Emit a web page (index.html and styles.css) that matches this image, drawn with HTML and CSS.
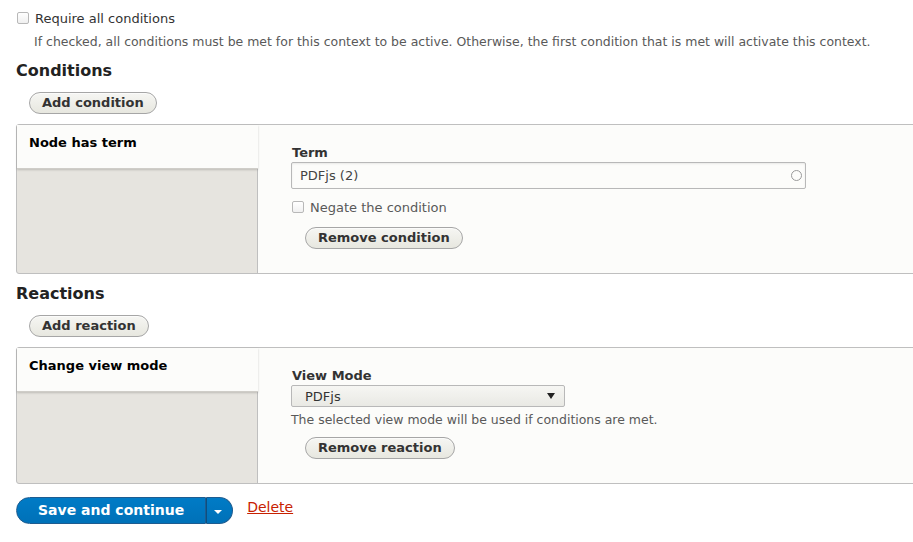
FILE: index.html
```html
<!DOCTYPE html>
<html>
<head>
<meta charset="utf-8">
<link rel="stylesheet" href="styles.css">
</head>
<body>
<div class="page">
  <div class="form-item top-check">
    <label class="check"><span class="cb"></span>Require all conditions</label>
    <div class="desc indent">If checked, all conditions must be met for this context to be active. Otherwise, the first condition that is met will activate this context.</div>
  </div>

  <h2 class="section first">Conditions</h2>
  <div class="btn-row"><button class="btn">Add condition</button></div>

  <div class="vtabs">
    <div class="menu">
      <div class="tab">Node has term</div>
    </div>
    <div class="pane pane-cond">
      <label class="field-label">Term</label>
      <div class="text-input"><span class="value">PDFjs (2)</span><span class="throbber"></span></div>
      <label class="check sub-check"><span class="cb"></span>Negate the condition</label>
      <div class="pane-btn"><button class="btn">Remove condition</button></div>
    </div>
  </div>

  <h2 class="section">Reactions</h2>
  <div class="btn-row"><button class="btn">Add reaction</button></div>

  <div class="vtabs">
    <div class="menu">
      <div class="tab">Change view mode</div>
    </div>
    <div class="pane pane-react">
      <label class="field-label">View Mode</label>
      <div class="select"><span class="value">PDFjs</span><span class="arrow"></span></div>
      <div class="desc">The selected view mode will be used if conditions are met.</div>
      <div class="pane-btn"><button class="btn">Remove reaction</button></div>
    </div>
  </div>

  <div class="actions">
    <div class="split">
      <button class="primary">Save and continue</button>
      <button class="primary toggle"><span class="caret"></span></button>
    </div>
    <a class="danger" href="#">Delete</a>
  </div>
</div>
</body>
</html>
```

FILE: styles.css
```css
html, body {
  margin: 0;
  padding: 0;
  background: #ffffff;
  overflow-x: hidden;
}
body {
  font-family: "DejaVu Sans", Verdana, sans-serif;
  font-size: 13px;
  color: #333333;
}
.page {
  padding: 10px 0 0 16px;
}
.check {
  display: flex;
  align-items: center;
  gap: 6px;
  font-size: 13px;
  line-height: 18px;
  color: #333;
}
.cb {
  display: inline-block;
  width: 10px;
  height: 10px;
  border: 1px solid #b8b8b8;
  border-radius: 2px;
  background: linear-gradient(#ffffff, #f0f0f0);
  margin-top: -3px;
}
.top-check .check {
  margin-left: 1px;
}
.desc {
  font-size: 12.48px;
  line-height: 17px;
  color: #595959;
}
.desc.indent {
  margin: 5px 0 0 18px;
}
.section {
  margin: 10px 0 0 0;
  font-size: 16px;
  line-height: 20px;
  font-weight: bold;
  color: #222;
}
.section.first {
  margin-top: 11px;
}
.btn-row {
  margin: 11px 0 0 13px;
}
.btn {
  font-family: "DejaVu Sans", Verdana, sans-serif;
  font-size: 13px;
  font-weight: bold;
  line-height: 18px;
  color: #333;
  padding: 1px 12px;
  border: 1px solid #a6a6a6;
  border-radius: 20em;
  background: linear-gradient(#f6f6f3, #e7e7df);
  box-shadow: 0 1px 0 rgba(255,255,255,0.6) inset;
  margin: 0;
}
.vtabs {
  display: flex;
  margin: 10px -40px 0 0;
  border: 1px solid #bfbfbf;
  border-radius: 3px;
  background: #e6e4df;
}
.menu {
  width: 240px;
  flex: none;
}
.tab {
  background: #fcfcfa;
  padding: 9px 12px 16px 12px;
  line-height: 18px;
  font-weight: bold;
  color: #000;
  border-bottom: 1px solid #cfcdc8;
  box-shadow: 0 1px 2px rgba(0,0,0,0.18);
  margin-right: -1px;
  position: relative;
  z-index: 1;
}
.pane {
  flex: 1;
  background: #fcfcfa;
  border-left: 1px solid #bfbfbf;
  padding: 19px 0 24px 33px;
}
.field-label {
  display: block;
  font-weight: bold;
  line-height: 18px;
  color: #333;
  padding-left: 1px;
}
.text-input {
  width: 502px;
  height: 25px;
  border: 1px solid #b8b8b8;
  border-radius: 2px;
  background: #fcfcfa;
  display: flex;
  align-items: center;
  justify-content: space-between;
  padding: 0 3px 0 8px;
  box-shadow: inset 0 1px 2px rgba(0,0,0,0.08);
}
.text-input .value {
  font-size: 13px;
  color: #444;
}
.throbber {
  width: 9px;
  height: 9px;
  border: 1.5px solid #9a9a9a;
  border-radius: 50%;
}
.sub-check {
  margin: 10px 0 0 1px;
  color: #595959;
}
.pane-btn {
  margin: 10px 0 0 14px;
}
.select {
  width: 250px;
  height: 20px;
  border: 1px solid #b8b8b8;
  border-radius: 2px;
  background: linear-gradient(#f6f6f3, #e9e9e4);
  display: flex;
  align-items: center;
  justify-content: space-between;
  padding: 0 9px 0 13px;
}
.select .value {
  font-size: 13px;
  color: #333;
}
.arrow {
  width: 0;
  height: 0;
  border-left: 4px solid transparent;
  border-right: 4px solid transparent;
  border-top: 6px solid #222;
}
.pane-react .desc {
  margin-top: 4px;
}
.pane-react .pane-btn {
  margin-top: 9px;
}
.actions {
  display: flex;
  align-items: center;
  gap: 14px;
  margin-top: 13px;
}
.split {
  display: flex;
}
.primary {
  font-family: "DejaVu Sans", Verdana, sans-serif;
  font-size: 14px;
  font-weight: bold;
  line-height: 17px;
  color: #fff;
  height: 27px;
  padding: 0 21px 0 21px;
  border: 1px solid #1e5c90;
  background: linear-gradient(#007bc6, #0071b8);
  border-radius: 20em 0 0 20em;
  margin: 0;
}
.primary.toggle {
  border-radius: 0 20em 20em 0;
  border-left: 1px solid #0b4f80;
  padding: 0 3px 0 0;
  width: 27px;
  display: flex;
  align-items: center;
  justify-content: center;
}
.caret {
  width: 0;
  height: 0;
  border-left: 4px solid transparent;
  border-right: 4px solid transparent;
  border-top: 4px solid #fff;
  margin-top: 2px;
}
.danger {
  color: #c72100;
  font-size: 14px;
  text-decoration: underline;
  margin-top: -8px;
}
```
